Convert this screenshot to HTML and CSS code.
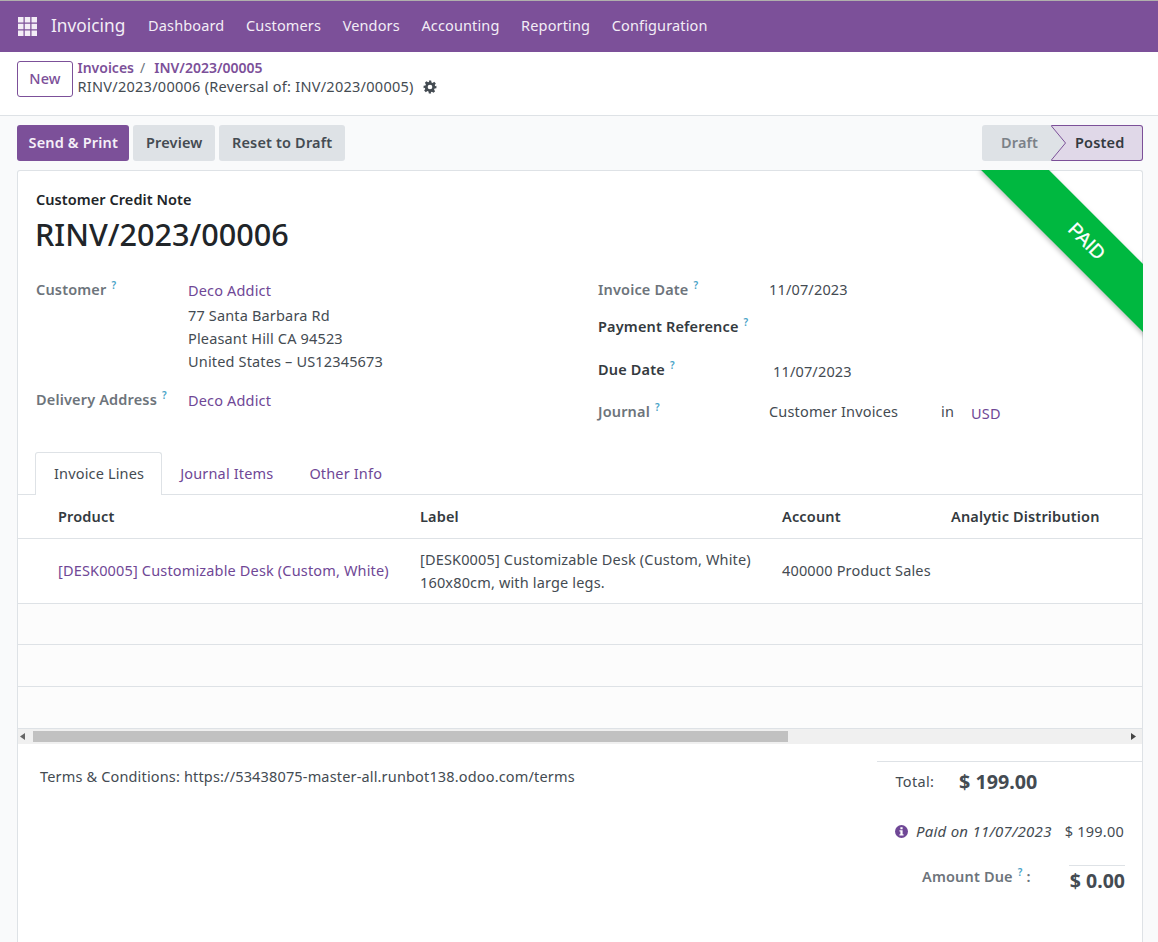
FILE: index.html
```html
<!DOCTYPE html>
<html lang="en">
<head>
<meta charset="utf-8">
<title>RINV/2023/00006</title>
<link rel="stylesheet" href="styles.css">
</head>
<body>
<nav class="navbar">
  <svg class="apps" width="19" height="19" viewBox="0 0 19 19"><g fill="#f3edf6"><rect x="0" y="0" width="5.5" height="5.5"/><rect x="6.75" y="0" width="5.5" height="5.5"/><rect x="13.5" y="0" width="5.5" height="5.5"/><rect x="0" y="6.75" width="5.5" height="5.5"/><rect x="6.75" y="6.75" width="5.5" height="5.5"/><rect x="13.5" y="6.75" width="5.5" height="5.5"/><rect x="0" y="13.5" width="5.5" height="5.5"/><rect x="6.75" y="13.5" width="5.5" height="5.5"/><rect x="13.5" y="13.5" width="5.5" height="5.5"/></g></svg>
  <span class="brand">Invoicing</span>
  <a class="menu">Dashboard</a><a class="menu">Customers</a><a class="menu">Vendors</a><a class="menu">Accounting</a><a class="menu">Reporting</a><a class="menu">Configuration</a>
</nav>
<header class="control">
  <button class="btn-new">New</button>
  <div class="crumbs">
    <div class="crumb-top"><a class="crumb-link">Invoices</a><span class="slash">/</span><a class="crumb-link">INV/2023/00005</a></div>
    <div class="crumb-cur">RINV/2023/00006 (Reversal of: INV/2023/00005)
      <svg class="gear" width="14" height="14" viewBox="0 0 24 24"><path fill="#444b52" fill-rule="evenodd" d="M10 1h4l.6 3.2 1.9.8 2.7-1.8 2.8 2.8-1.8 2.7.8 1.9L23 10v4l-3.2.6-.8 1.9 1.8 2.7-2.8 2.8-2.7-1.8-1.9.8L14 23h-4l-.6-3.2-1.9-.8-2.7 1.8-2.8-2.8 1.8-2.7-.8-1.9L1 14v-4l3.2-.6.8-1.9-1.8-2.7 2.8-2.8 2.7 1.8 1.9-.8zM12 8a4 4 0 1 0 0 8 4 4 0 0 0 0-8z"/></svg>
    </div>
  </div>
</header>
<section class="actions">
  <div class="btns">
    <button class="btn primary">Send &amp; Print</button>
    <button class="btn preview">Preview</button>
    <button class="btn reset">Reset to Draft</button>
  </div>
  <div class="status">
    <span class="st-draft">Draft</span>
    <span class="st-posted">
      <svg class="chev" width="24" height="36" viewBox="0 0 24 36"><path d="M0 0 L14.5 18 L0 36 Z" fill="#dee2e6"/><path d="M0 .5 L14.5 18 L0 35.5" fill="none" stroke="#7c5099" stroke-width="1"/></svg>
      Posted
    </span>
  </div>
</section>
<main class="sheet">
  <div class="ribbon"><span>PAID</span></div>
  <div class="head">
    <div class="doc-type">Customer Credit Note</div>
    <h1 class="doc-name">RINV/2023/00006</h1>
    <div class="groups">
      <div class="col-left">
        <div class="row r-cust">
          <label class="lbl">Customer<sup class="q">?</sup></label>
          <div class="val">
            <a class="link">Deco Addict</a>
            <div class="addr">77 Santa Barbara Rd<br>Pleasant Hill CA 94523<br>United States – US12345673</div>
          </div>
        </div>
        <div class="row r-del">
          <label class="lbl">Delivery Address<sup class="q">?</sup></label>
          <div class="val"><a class="link">Deco Addict</a></div>
        </div>
      </div>
      <div class="col-right">
        <div class="rrow r1"><label class="lbl2">Invoice Date<sup class="q">?</sup></label><span class="v">11/07/2023</span></div>
        <div class="rrow r2"><label class="lbl2 dark">Payment Reference<sup class="q">?</sup></label></div>
        <div class="rrow r3"><label class="lbl2 dark">Due Date<sup class="q">?</sup></label><span class="v due">11/07/2023</span></div>
        <div class="rrow r4"><label class="lbl2">Journal<sup class="q">?</sup></label><span class="v j">Customer Invoices</span><span class="in">in</span><a class="link usd">USD</a></div>
      </div>
    </div>
    <div class="tabs">
      <a class="tab active">Invoice Lines</a><a class="tab">Journal Items</a><a class="tab">Other Info</a>
    </div>
  </div>
  <div class="table">
    <div class="tr th"><div class="c1">Product</div><div class="c2">Label</div><div class="c3">Account</div><div class="c4">Analytic Distribution</div></div>
    <div class="tr line"><div class="c1"><a class="link">[DESK0005] Customizable Desk (Custom, White)</a></div><div class="c2">[DESK0005] Customizable Desk (Custom, White)<br>160x80cm, with large legs.</div><div class="c3">400000 Product Sales</div></div>
    <div class="tr empty"></div>
    <div class="tr empty e2"></div>
    <div class="tr empty e3"></div>
    <div class="scroll">
      <svg class="arr" width="5" height="7" viewBox="0 0 5 7"><path d="M5 0v7L0 3.5z" fill="#666"/></svg>
      <div class="track"><div class="thumb"></div></div>
      <svg class="arr" width="5" height="7" viewBox="0 0 5 7"><path d="M0 0v7l5-3.5z" fill="#444"/></svg>
    </div>
  </div>
  <div class="foot">
    <div class="terms">Terms &amp; Conditions: https://53438075-master-all.runbot138.odoo.com/terms</div>
    <div class="totals">
      <div class="total"><span class="t-lbl">Total:</span><strong class="t-val">$ 199.00</strong></div>
      <div class="paid">
        <svg class="info" width="13" height="13" viewBox="0 0 14 14"><circle cx="7" cy="7" r="7" fill="#6f4796"/><rect x="5.8" y="2.4" width="2.4" height="2.2" fill="#fff"/><path d="M4.8 5.6h3.4v4.4h1v1.4H4.8V10h1V7h-1z" fill="#fff"/></svg>
        <em>Paid on 11/07/2023</em><span class="p-amt">$ 199.00</span>
      </div>
      <div class="due-row"><span class="d-lbl">Amount Due<sup class="q">?</sup> :</span><strong class="d-val">$ 0.00</strong></div>
    </div>
  </div>
</main>
</body>
</html>
```
FILE: styles.css
```css
* { box-sizing: border-box; }
html, body { height: 100%; }
body { margin: 0; height: 942px; overflow: hidden; background: #f9fafb; color: #444b52; font-family: "Noto Sans", "Open Sans", sans-serif; font-size: 14.5px; letter-spacing: .16px; line-height: 21px; }
a { text-decoration: none; }
button { letter-spacing: inherit; }
.navbar { height: 52px; border-top: 1px solid #b0b0ac; background: #7c5099; color: #f3edf6; display: flex; align-items: center; padding: 0 0 2px 18px; }
.apps { flex: none; margin-top: 2px; }
.brand { font-size: 17.3px; letter-spacing: 0; margin-left: 14px; margin-right: 12px; }
.menu { padding: 0 10.8px; letter-spacing: .14px; }
.control { height: 64px; background: #fff; border-bottom: 1px solid #dee2e6; display: flex; padding: 8px 17px 0; }
.btn-new { width: 56px; height: 36px; margin-top: 1px; padding: 0 0 2px; border: 1px solid #7c5099; border-radius: 3px; background: #fff; color: #7c5099; font: 500 14.5px "Noto Sans", sans-serif; }
.crumbs { margin-left: 4.5px; }
.crumb-top { height: 19px; display: flex; font-size: 14px; letter-spacing: 0; font-weight: 600; color: #7c5099; line-height: 16px; }
.crumb-link { color: #7c5099; }
.slash { margin: 0 9px 0 6px; font-weight: 400; color: #6c757d; }
.crumb-cur { color: #444b52; letter-spacing: .27px; line-height: 18px; margin-top: -2px; white-space: nowrap; }
.gear { vertical-align: -2px; margin-left: 5px; }
.actions { height: 54px; padding: 9px 15px 0 17px; display: flex; justify-content: space-between; align-items: flex-start; }
.btns { display: flex; gap: 3.5px; }
.btn { height: 36px; border: 0; border-radius: 3px; background: #dee2e6; color: #444b52; font: 600 14.5px "Noto Sans", sans-serif; padding: 0 12px 2px; }
.btn.primary { background: #7c5099; color: #f5eff8; padding: 0 11.5px 2px; }
.btn.preview { padding: 0 13px 2px; }
.btn.reset { padding: 0 12.5px 2px; margin-left: .5px; }
.status { display: flex; height: 36px; }
.st-draft { width: 69px; background: #dee2e6; border-radius: 3px 0 0 3px; color: #7b8188; font-weight: 600; padding-left: 19px; line-height: 35px; }
.st-posted { position: relative; width: 92px; background: #e0d8e8; border: 1px solid #7c5099; border-left: 0; border-radius: 0 3px 3px 0; color: #343a40; font-weight: 600; padding-left: 24px; line-height: 33px; }
.chev { position: absolute; left: 0; top: -1px; }
.sheet { position: relative; margin: 0 15px 0 17px; height: 773px; background: #fff; border: 1px solid #dee2e6; border-bottom: 0; border-radius: 3px 3px 0 0; }
.ribbon { position: absolute; top: -1px; right: -1px; width: 170px; height: 170px; overflow: hidden; pointer-events: none; }
.ribbon span { position: absolute; left: -13.5px; top: 50.5px; width: 260px; height: 48px; padding-right: 10px; background: #00b840; color: #fff; text-align: center; font: 19px/48px "Liberation Sans", sans-serif; letter-spacing: 0; -webkit-text-stroke: .3px #fff; transform: rotate(45deg); box-shadow: 0 2px 5px rgba(0,0,0,.25); }
.head { padding: 18px 17px 0 18px; }
.doc-type { color: #212529; font-weight: 600; letter-spacing: .06px; line-height: 21px; }
.doc-name { margin: 4px 0 0 -1px; color: #212529; font-size: 30.6px; letter-spacing: 0; line-height: 40px; font-weight: 500; }
.groups { display: flex; margin-top: 25px; height: 170px; }
.col-left { width: 562px; }
.row { display: flex; }
.lbl { width: 152px; font-weight: 600; color: #6d747b; }
.q { color: #4aa3c7; font-size: 10px; line-height: 0; font-weight: 600; margin-left: 5px; vertical-align: 6px; }
.link { color: #6f4796; }
.val { line-height: 23px; }
.val .addr { margin-top: 1.5px; line-height: 23.3px; }
.r-del { margin-top: 15.6px; }
.col-right { flex: 1; position: relative; }
.rrow { display: flex; }
.lbl2 { width: 171px; flex: none; font-weight: 600; color: #6d747b; }
.lbl2.dark { color: #343a40; }
.r1 { height: 37px; }
.r2 { height: 43px; }
.r3 { height: 42px; }
.v.due { margin-left: 4px; margin-top: 2px; }
.v.j { width: 172px; }
.in { width: 30px; }
.usd { margin-top: 2px; }
.tabs { display: flex; height: 43px; margin: 3px 0 0 -1px; position: relative; }
.tab { padding: 0 18px; line-height: 42px; color: #6f4796; }
.tab.active { padding: 0 17px 0 18px; color: #444b52; background: #fff; border: 1px solid #dee2e6; border-bottom: 0; border-radius: 3px 3px 0 0; line-height: 40px; height: 43px; position: relative; z-index: 1; }
.table { border-top: 1px solid #dee2e6; margin-top: -1px; }
.tr { display: flex; border-bottom: 1px solid #dee2e6; }
.c1 { width: 402px; padding-left: 40px; flex: none; white-space: nowrap; }
.c2 { width: 362px; flex: none; }
.c3 { width: 169px; flex: none; }
.c4 { flex: none; white-space: nowrap; }
.th { height: 44px; align-items: center; font-weight: 600; color: #343a40; }
.line { height: 65px; align-items: center; line-height: 23px; }
.line .c1, .line .c3 { padding-bottom: 2px; }
.empty { height: 41px; background: #fcfcfc; }
.e2 { height: 42px; }
.e3 { height: 42px; }
.scroll { height: 15px; background: #f0f0f0; display: flex; align-items: center; padding: 0 6px 0 2px; gap: 8px; }
.track { flex: 1; height: 11px; }
.thumb { width: 755px; height: 11px; background: #c1c1c1; }
.arr { flex: none; }
.foot { display: flex; justify-content: space-between; padding: 0 17px 0 22px; }
.terms { padding-top: 22px; }
.totals { width: 265px; margin-right: -17px; margin-top: 17px; border-top: 1px solid #dee2e6; padding: 0 0 0 18px; }
.total { display: flex; align-items: center; height: 38px; }
.t-lbl { width: 63.5px; margin-left: .5px; padding-top: 1px; letter-spacing: .3px; }
.t-val { font-size: 19.7px; letter-spacing: 0; font-weight: 700; }
.paid { display: flex; align-items: center; margin-top: 11px; height: 40px; }
.paid em { margin-left: 8px; font-size: 15px; letter-spacing: .24px; }
.p-amt { margin-left: 13px; letter-spacing: .25px; white-space: nowrap; }
.due-row { display: flex; margin-top: 14px; position: relative; }
.d-lbl { margin-left: 27px; width: 147px; font-weight: 600; color: #6d747b; padding-top: 1px; white-space: nowrap; }
.d-val { border-top: 1px solid #dee2e6; width: 56px; text-align: right; font-size: 19.5px; letter-spacing: 0; font-weight: 700; padding-top: 1px; line-height: 28px; white-space: nowrap; }
```
